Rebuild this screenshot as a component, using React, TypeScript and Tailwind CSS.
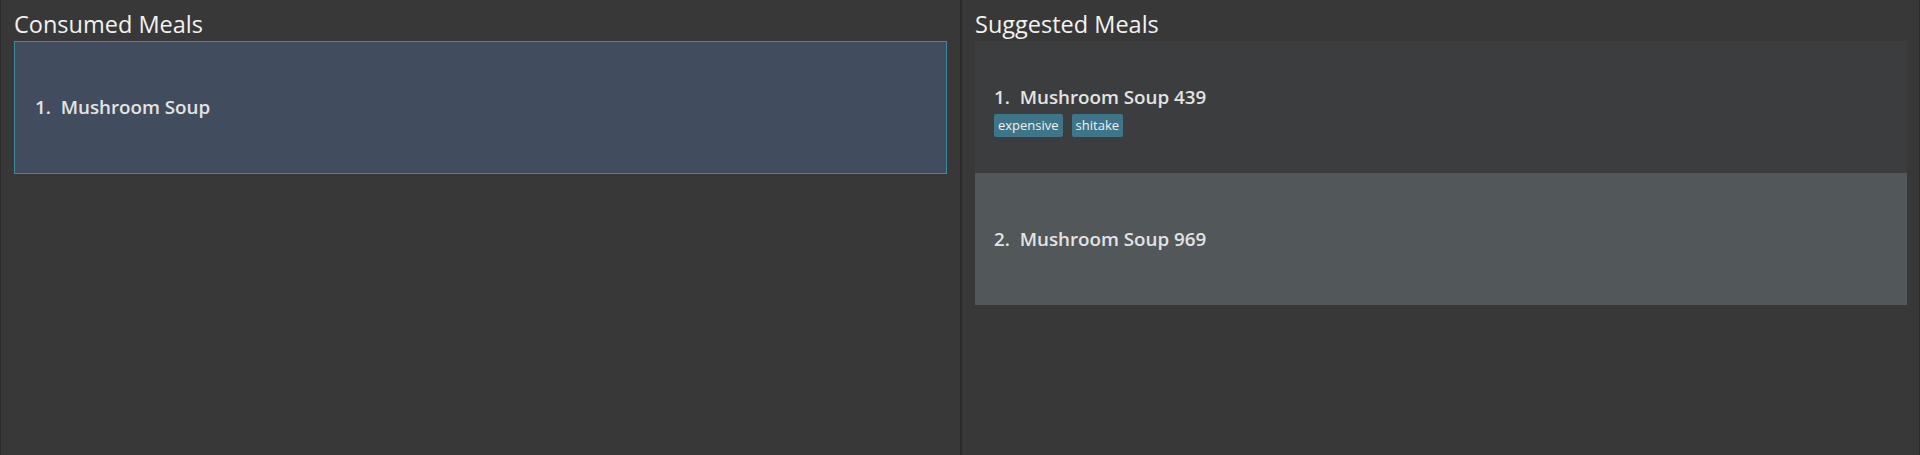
const font = { fontFamily: '"Open Sans", "Noto Sans", sans-serif' }

const suggested = [
  { name: 'Mushroom Soup', cal: 439, tags: ['expensive', 'shitake'] },
  { name: 'Mushroom Soup', cal: 969, tags: [] as string[] },
]

export default function App() {
  return (
    <div className="flex h-[455px] w-[1920px] overflow-hidden bg-[#383838] text-[#e3e3e3]" style={font}>
      {/* ── Consumed ─────────────────────────────── */}
      <section className="flex w-[960px] flex-col border-l border-[#2c2c2c] pl-[13px] pr-[13px]">
        <h2 className="h-[41px] pt-[8px] text-[23.5px] font-normal leading-[32px] text-[#f2f2f2]">Consumed Meals</h2>
        <div className="flex h-[133px] items-center border border-[#3b8aa0] bg-[#414d5e] pl-[20px]">
          <span className="text-[18.8px] font-semibold text-[#e3e3e3]">
            1.&nbsp;&nbsp;Mushroom Soup
          </span>
        </div>
      </section>

      <div className="w-[2px] bg-[#2b2b2b]" />

      {/* ── Suggested ────────────────────────────── */}
      <section className="flex flex-1 flex-col border-r border-[#2c2c2c] pl-[13px] pr-[12px]">
        <h2 className="h-[41px] pt-[8px] text-[23.5px] font-normal leading-[32px] text-[#f2f2f2]">Suggested Meals</h2>
        {suggested.map((m, i) => (
          <div
            key={i}
            className={
              'flex h-[132px] flex-col justify-center pl-[19px] ' +
              (i % 2 === 0 ? 'bg-[#3c3d3f] pt-[6px]' : 'bg-[#525759]')
            }
          >
            <div className="text-[18.8px] font-semibold leading-[26px]">
              {i + 1}.&nbsp;&nbsp;{m.name} <span className="font-semibold">{m.cal}</span>
            </div>
            {m.tags.length > 0 && (
              <div className="mt-[4px] flex gap-[9px]">
                {m.tags.map((t) => (
                  <span key={t} className="rounded-[2px] bg-[#3e7589] px-[4px] text-[13px] leading-[23px] text-[#f0f0f0]">
                    {t}
                  </span>
                ))}
              </div>
            )}
          </div>
        ))}
      </section>
    </div>
  )
}
